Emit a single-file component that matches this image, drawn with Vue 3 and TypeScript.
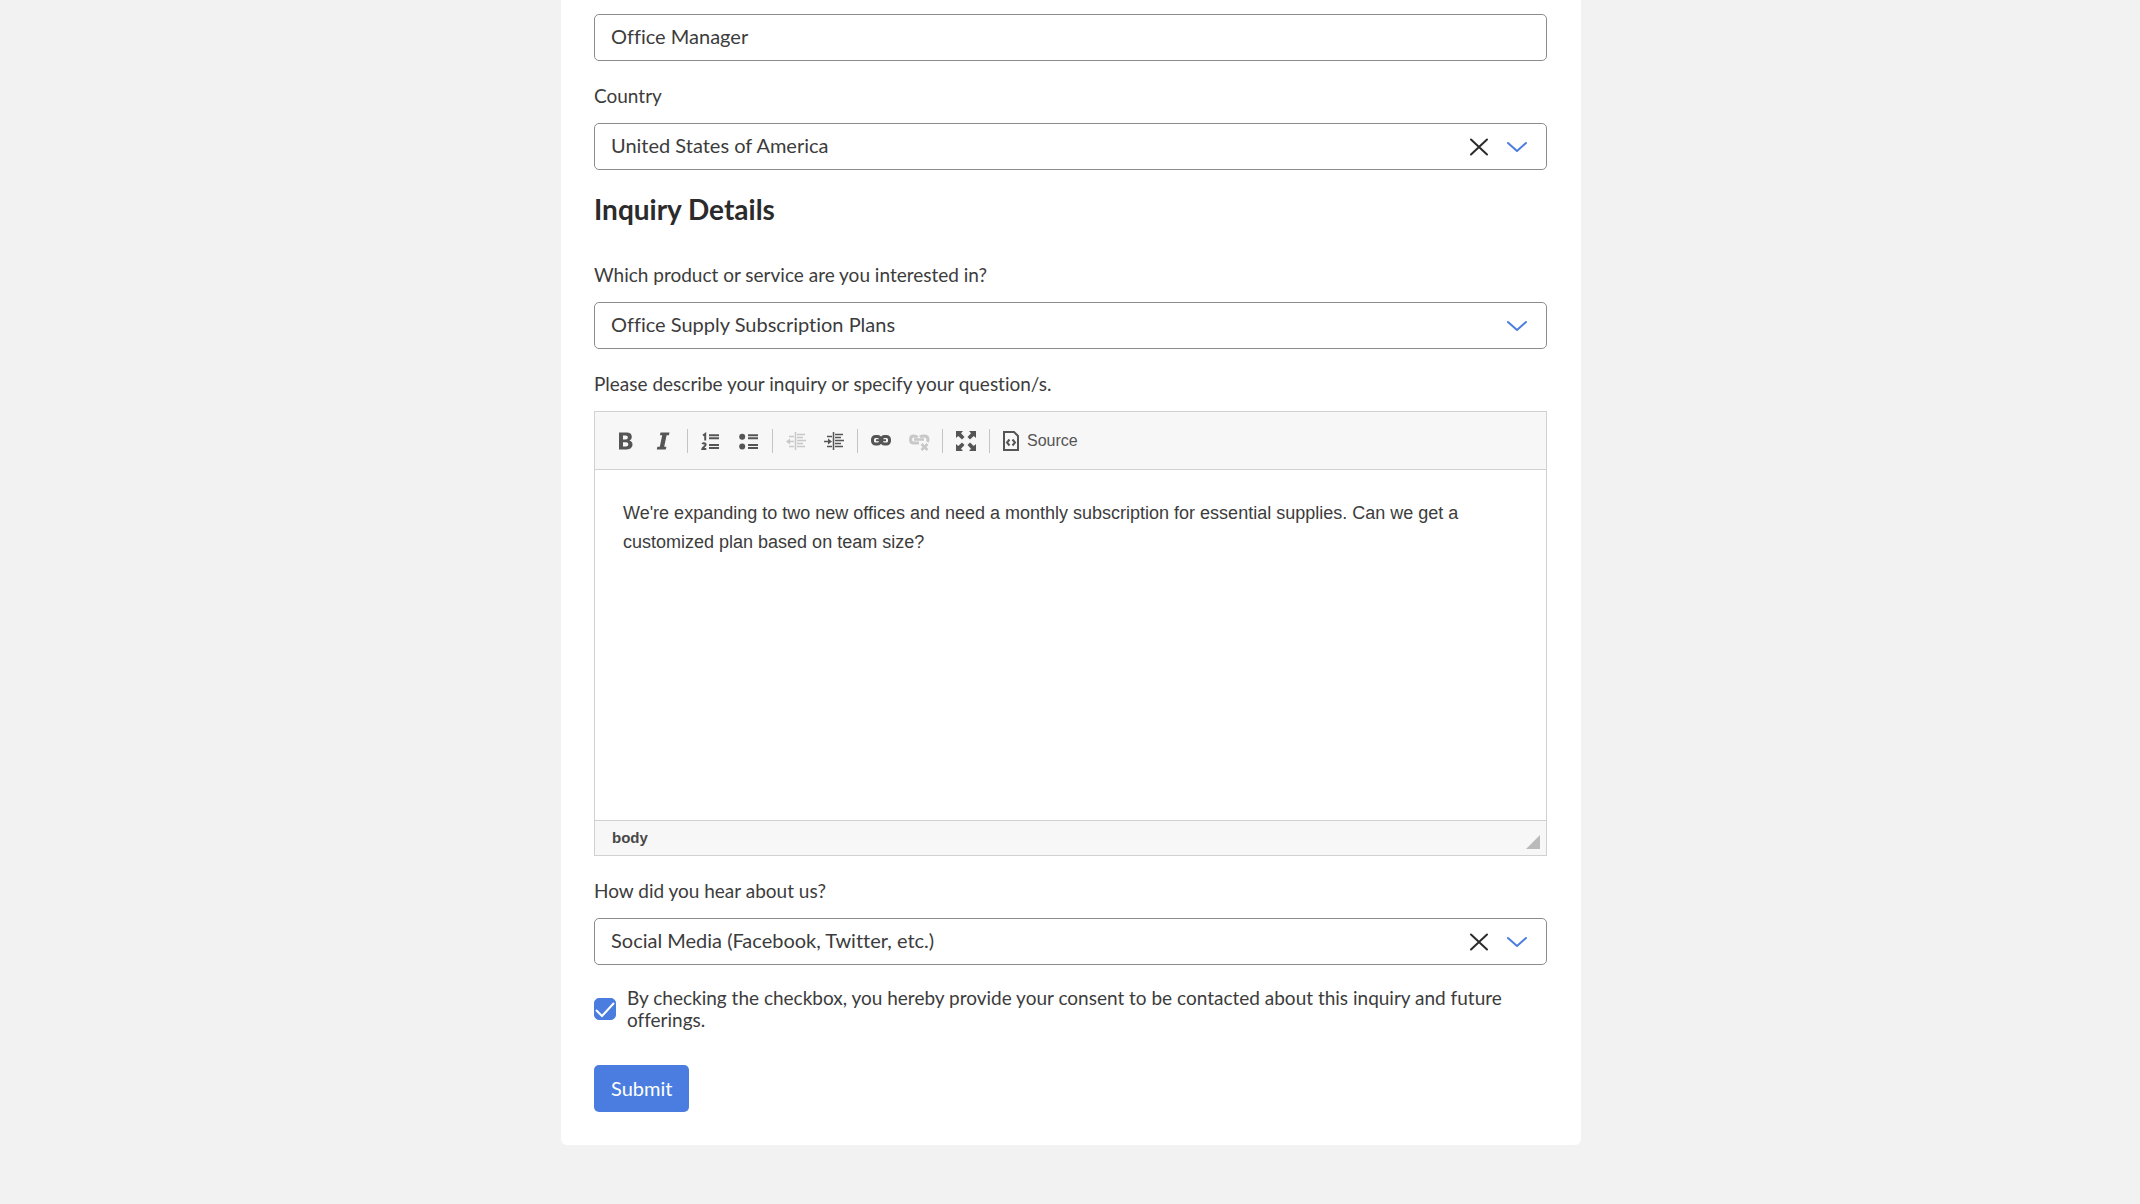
<script setup lang="ts">
import { ref } from 'vue'

const jobTitle = ref('Office Manager')
const country = ref('United States of America')
const product = ref('Office Supply Subscription Plans')
const inquiry = ref(
  "We're expanding to two new offices and need a monthly subscription for essential supplies. Can we get a customized plan based on team size?",
)
const source = ref('Social Media (Facebook, Twitter, etc.)')
const consent = ref(true)
</script>

<template>
  <main class="page">
    <form class="card" @submit.prevent>
      <input v-model="jobTitle" class="control" type="text" aria-label="Job title" />

      <div class="field">
        <label for="country">Country</label>
        <div class="select">
          <select id="country" v-model="country" class="control">
            <option value=""></option>
            <option>United States of America</option>
          </select>
          <div class="select-icons">
            <button class="clear" type="button" aria-label="Clear country" @click="country = ''">
              <svg width="20" height="20" viewBox="0 0 20 20"><path d="M2 2.500 18 17.500M18 2.500 2 17.500" /></svg>
            </button>
            <svg class="chevron" width="20" height="20" viewBox="0 0 20 20"><path d="M1 6l9 8 9-8" /></svg>
          </div>
        </div>
      </div>

      <h2>Inquiry Details</h2>

      <div class="field">
        <label for="product">Which product or service are you interested in?</label>
        <div class="select">
          <select id="product" v-model="product" class="control">
            <option>Office Supply Subscription Plans</option>
          </select>
          <div class="select-icons">
            <svg class="chevron" width="20" height="20" viewBox="0 0 20 20"><path d="M1 6l9 8 9-8" /></svg>
          </div>
        </div>
      </div>

      <div class="field">
        <label for="inquiry">Please describe your inquiry or specify your question/s.</label>
        <div class="editor">
          <div class="toolbar" role="toolbar" aria-label="Formatting">
            <button class="tool" type="button" aria-label="Bold">
              <svg width="22" height="22" viewBox="0 0 22 22">
                <path fill-rule="evenodd" d="M4 2.500h7.500c3.500 0 5.300 1.600 5.300 4.200 0 1.900-.9 3.200-2.500 3.900 2 .5 3.200 1.900 3.200 4 0 3-2.200 4.900-5.800 4.900H4zM8 5.500v3.900h2.700c1.400 0 2.100-.7 2.100-2 0-1.200-.7-1.900-2.100-1.900zm0 6.700v4.200h3c1.500 0 2.300-.7 2.300-2.100s-.8-2.100-2.300-2.100z" />
              </svg>
            </button>
            <button class="tool" type="button" aria-label="Italic">
              <svg width="22" height="22" viewBox="0 0 22 22">
                <path d="M7.500 2.500h9l-.6 2.800h-2.300l-2.400 11.400h2.200l-.6 2.800h-9l.6-2.800h2.400l2.400-11.400H6.900z" />
              </svg>
            </button>
            <span class="divider"></span>
            <button class="tool" type="button" aria-label="Numbered list">
              <svg width="22" height="22" viewBox="0 0 22 22">
                <path class="line" stroke-width="2" d="M3 5.500 5.200 4v6.500M2.300 14c.8-1.200 3.400-1 3.400.6 0 1.500-3 2.600-3.400 4.500h4" />
                <path class="line" stroke-width="2" d="M9 5.200h10M9 8.200h10M9 15h10M9 18h10" />
              </svg>
            </button>
            <button class="tool" type="button" aria-label="Bulleted list">
              <svg width="22" height="22" viewBox="0 0 22 22">
                <circle cx="4.200" cy="6.700" r="3" /><circle cx="4.200" cy="16.500" r="3" />
                <path class="line" stroke-width="2" d="M10 5.200h10M10 8.200h10M10 15h10M10 18h10" />
              </svg>
            </button>
            <span class="divider"></span>
            <button class="tool" type="button" disabled aria-label="Decrease indent">
              <svg width="22" height="22" viewBox="0 0 22 22">
                <path class="line" stroke-width="1.500" d="M10.500 2v18M12 4.500h8M12 7.500h6M12 10.500h9M12 13.500h6M12 16.500h8M4 6.500h5M4 16.500h5M3 11.500h6" />
                <path d="M5 8.500v6l-4-3z" />
              </svg>
            </button>
            <button class="tool" type="button" aria-label="Increase indent">
              <svg width="22" height="22" viewBox="0 0 22 22">
                <path class="line" stroke-width="1.500" d="M10.500 2v18M12 4.500h8M12 7.500h6M12 10.500h9M12 13.500h6M12 16.500h8M4 6.500h5M4 16.500h5M1 11.500h5" />
                <path d="M5 8.500v6l4-3z" />
              </svg>
            </button>
            <span class="divider"></span>
            <button class="tool" type="button" aria-label="Link">
              <svg width="22" height="22" viewBox="0 0 22 22">
                <rect class="line" x="2.500" y="6.500" width="8" height="7.500" rx="3" stroke-width="3" />
                <rect class="line" x="11.500" y="6.500" width="8" height="7.500" rx="3" stroke-width="3" />
                <path class="line" stroke-width="2" d="M6 10.200h10" />
              </svg>
            </button>
            <button class="tool" type="button" disabled aria-label="Unlink">
              <svg width="22" height="22" viewBox="0 0 22 22">
                <path class="line" stroke-width="3" d="M9.500 7.500C8.500 6.200 7.500 6 5.500 6c-2 0-3 1.500-3 3.500s1 3.500 3 3.500H11M12 7c1-.8 2-1 4-1 3 0 4 1.500 4 3.500 0 1-.3 1.800-.8 2.400" />
                <path class="line" stroke-width="2.500" d="M6 9.500h10M13.500 14l6 6M19.500 14l-6 6" />
              </svg>
            </button>
            <span class="divider"></span>
            <button class="tool" type="button" aria-label="Maximize">
              <svg width="22" height="22" viewBox="0 0 22 22">
                <path d="M1 1h7L6 3.200 9.500 7 7 9.500 3.200 6 1 8zM21 1v7l-2.200-2L15 9.500 12.500 7 16 3.200 14 1zM1 21v-7l2.200 2L7 12.500 9.500 15 6 18.800 8 21zM21 21h-7l2-2.200-3.500-3.800 2.500-2.500 3.800 3.500 2.200-2z" />
              </svg>
            </button>
            <span class="divider"></span>
            <button class="tool tool-text" type="button">
              <svg width="18" height="22" viewBox="0 0 18 22">
                <path class="line" stroke-width="2" d="M2 2h10l4 4v14H2z" />
                <path class="line" stroke-width="2" d="M7.500 9.500 5 12.500l2.500 3M10.500 9.500 13 12.500l-2.500 3" />
              </svg>
              Source
            </button>
          </div>
          <textarea id="inquiry" v-model="inquiry" spellcheck="false"></textarea>
          <div class="statusbar">
            <span>body</span>
            <svg class="grip" width="14" height="14" viewBox="0 0 14 14"><path d="M14 0v14H0z" /></svg>
          </div>
        </div>
      </div>

      <div class="field">
        <label for="source">How did you hear about us?</label>
        <div class="select">
          <select id="source" v-model="source" class="control">
            <option value=""></option>
            <option>Social Media (Facebook, Twitter, etc.)</option>
          </select>
          <div class="select-icons">
            <button class="clear" type="button" aria-label="Clear answer" @click="source = ''">
              <svg width="20" height="20" viewBox="0 0 20 20"><path d="M2 2.500 18 17.500M18 2.500 2 17.500" /></svg>
            </button>
            <svg class="chevron" width="20" height="20" viewBox="0 0 20 20"><path d="M1 6l9 8 9-8" /></svg>
          </div>
        </div>
      </div>

      <div class="consent">
        <span class="check">
          <input id="consent" v-model="consent" type="checkbox" />
          <svg v-if="consent" width="22" height="22" viewBox="0 0 22 22"><path d="M2 12l6 6L20 5" /></svg>
        </span>
        <label for="consent">By checking the checkbox, you hereby provide your consent to be contacted about this inquiry and future offerings.</label>
      </div>

      <button class="submit" type="submit">Submit</button>
    </form>
  </main>
</template>

<style>
body {
  background: #f2f2f2;
}
</style>

<style scoped>
.page {
  padding: 0 0 59px 2px;
  font: 20px/24px Lato, sans-serif;
  font-variant-ligatures: none;
  color: #3c3c3c;
}

.card {
  box-sizing: border-box;
  max-width: 1020px;
  margin: 0 auto;
  padding: 14px 34px 33px 33px;
  background: #fff;
  border-radius: 0 0 6px 6px;
}

.control {
  display: block;
  box-sizing: border-box;
  width: 100%;
  height: 47px;
  margin: 0;
  padding: 0 16px 3px;
  border: 1px solid #8c8c8c;
  border-radius: 5px;
  background: #fff;
  font: inherit;
  font-variant-ligatures: none;
  color: inherit;
  appearance: none;
}

.field {
  margin-top: 23px;
}

.field > label {
  display: block;
  margin-bottom: 15px;
  font-size: 19px;
}

.select {
  position: relative;
}

.select-icons {
  position: absolute;
  inset: 0 20px 0 auto;
  display: flex;
  align-items: center;
  gap: 18px;
  pointer-events: none;
}

.select-icons path {
  fill: none;
  stroke-width: 2;
  stroke-linecap: round;
  stroke-linejoin: round;
}

.clear {
  display: flex;
  padding: 0;
  border: 0;
  background: none;
  stroke: #2b2b2b;
  pointer-events: auto;
}

.chevron {
  stroke: #4a7ddf;
}

h2 {
  margin: 23px 0 38px;
  font-size: 28px;
  line-height: 32px;
  font-weight: 700;
  color: #2b2b2b;
}

h2 + .field {
  margin-top: 0;
}

.editor {
  border: 1px solid #d1d1d1;
  font-family: "Liberation Sans", Arial, sans-serif;
}

.toolbar {
  display: flex;
  align-items: center;
  height: 57px;
  padding: 0 12px;
  background: #f7f7f7;
  border-bottom: 1px solid #d1d1d1;
}

.tool {
  display: flex;
  align-items: center;
  justify-content: center;
  width: 38px;
  height: 38px;
  padding: 0;
  border: 0;
  background: none;
  color: #555;
  fill: currentColor;
}

.tool:disabled {
  color: #c8c8c8;
}

.tool .line {
  fill: none;
  stroke: currentColor;
}

.tool-text {
  gap: 7px;
  width: auto;
  padding: 0 8px;
  font: 16px/24px "Liberation Sans", Arial, sans-serif;
}

.divider {
  width: 1px;
  height: 24px;
  margin: 0 4px;
  background: #c4c4c4;
}

textarea {
  display: block;
  box-sizing: border-box;
  width: 100%;
  height: 350px;
  padding: 29px 28px;
  border: 0;
  resize: none;
  background: #fff;
  font: 18px/29px "Liberation Sans", Arial, sans-serif;
  color: #3c3c3c;
}

.statusbar {
  display: flex;
  align-items: center;
  justify-content: space-between;
  height: 34px;
  padding: 0 6px 0 17px;
  background: #f7f7f7;
  border-top: 1px solid #d1d1d1;
  font-size: 15px;
  font-weight: 700;
  color: #484848;
}

.grip {
  align-self: flex-end;
  margin-bottom: 6px;
  fill: #bababa;
}

.consent {
  display: flex;
  align-items: center;
  gap: 11px;
  margin-top: 22px;
  font-size: 19px;
  line-height: 22px;
}

.check {
  position: relative;
  flex: none;
  display: flex;
}

.check input {
  width: 22px;
  height: 22px;
  margin: 0;
  border: 1px solid #8c8c8c;
  border-radius: 5px;
  appearance: none;
}

.check input:checked {
  border-color: #4a7ddf;
  background: #4a7ddf;
}

.check svg {
  position: absolute;
  inset: 0;
  fill: none;
  stroke: #fff;
  stroke-width: 2;
  pointer-events: none;
}

.submit {
  display: block;
  height: 47px;
  margin-top: 34px;
  padding: 0 17px 2px;
  border: 0;
  border-radius: 5px;
  background: #4a7ddf;
  font: inherit;
  color: #fff;
}
</style>
